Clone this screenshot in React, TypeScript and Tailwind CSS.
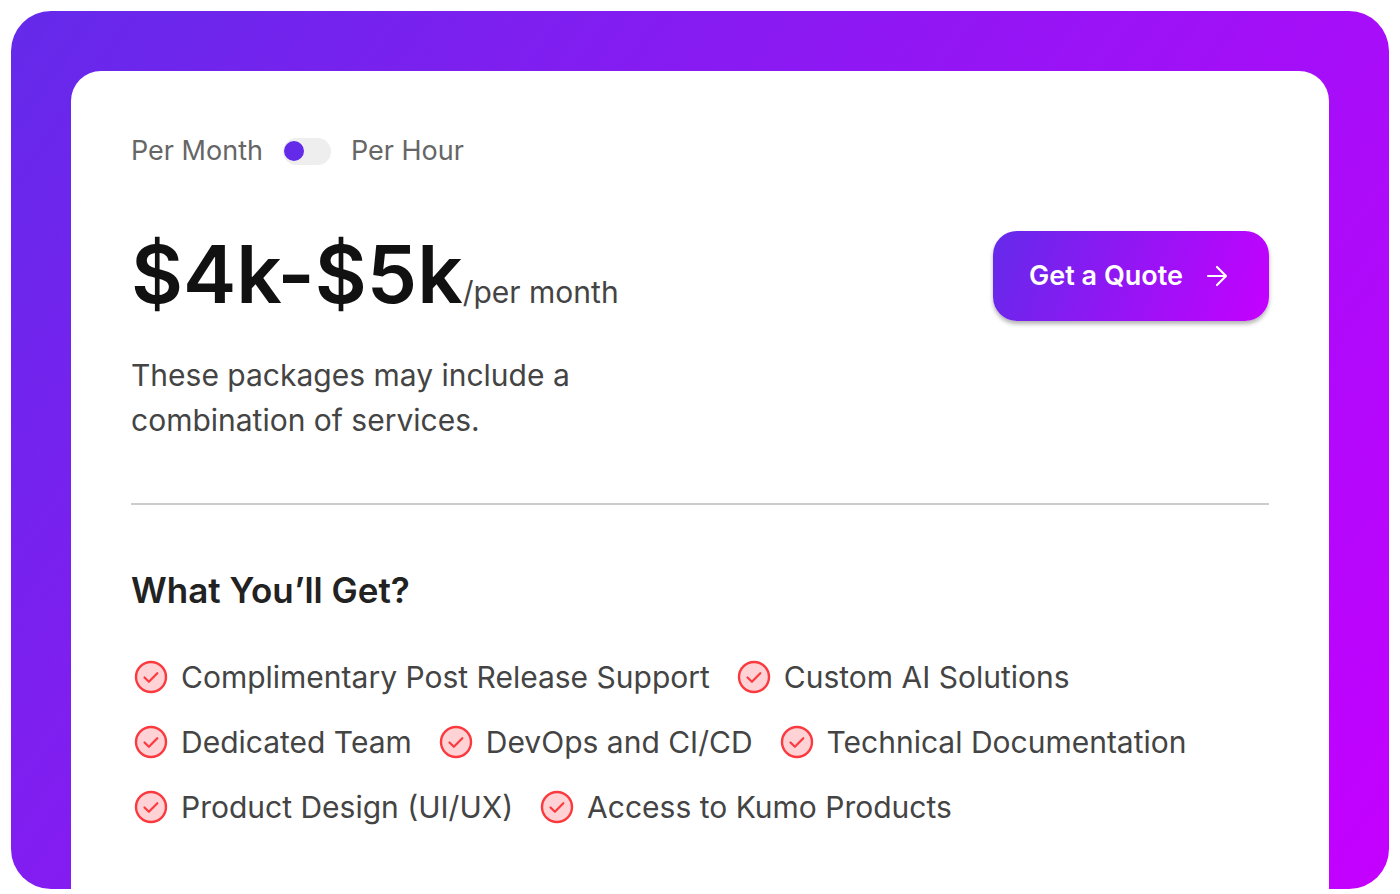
import { useState } from "react";

const features = [
  "Complimentary Post Release Support",
  "Custom AI Solutions",
  "Dedicated Team",
  "DevOps and CI/CD",
  "Technical Documentation",
  "Product Design (UI/UX)",
  "Access to Kumo Products",
];

const CheckIcon = () => (
  <svg
    viewBox="0 0 40 40"
    className="size-10 shrink-0"
    fill="none"
    aria-hidden="true"
  >
    <circle cx="20" cy="20" r="15" fill="#ffd3d5" stroke="#fb3a3f" strokeWidth="2.4" />
    <path
      d="M13.5 20.5l4.4 4.3 8.4-8.6"
      stroke="#fb3a3f"
      strokeWidth="2.2"
      strokeLinecap="round"
      strokeLinejoin="round"
    />
  </svg>
);

const ArrowIcon = () => (
  <svg
    viewBox="0 0 24 24"
    className="size-6"
    fill="none"
    stroke="currentColor"
    strokeWidth="2.2"
    strokeLinecap="round"
    strokeLinejoin="round"
    aria-hidden="true"
  >
    <path d="M3 12h18M12 3l9 9-9 9" />
  </svg>
);

const BillingToggle = () => {
  const [hourly, setHourly] = useState(false);

  return (
    <label className="flex items-center gap-5 text-[27px] leading-10 text-[#666666]">
      <span>Per Month</span>
      <input
        type="checkbox"
        role="switch"
        aria-label="Bill per hour"
        checked={hourly}
        onChange={(e) => setHourly(e.target.checked)}
        className="flex h-[27px] w-12 shrink-0 cursor-pointer appearance-none items-center rounded-full bg-[#eeeeee] px-px before:size-5 before:rounded-full before:bg-[#642aea] before:content-[''] checked:justify-end"
      />
      <span>Per Hour</span>
    </label>
  );
};

const App = () => {
  return (
    <main className="bg-white p-[11px] pb-[5px] font-['Inter',sans-serif]">
      <section className="rounded-[40px] bg-linear-125/srgb from-[#642aea] to-[#c500ff] px-[60px] pt-[60px]">
        <div className="rounded-t-[30px] bg-white px-[60px] pt-[60px] pb-[62px]">
          <BillingToggle />

          {/* Price and call to action */}
          <div className="mt-[60px] flex items-start justify-between">
            <div>
              <p className="flex items-baseline leading-[86px] text-[#444444]">
                <span className="text-[80px] font-semibold text-[#111111]">
                  $4k-$5k
                </span>
                <span className="text-[30px] leading-10">/per month</span>
              </p>
              <p className="mt-9 max-w-[480px] text-[30px] leading-[45px] text-[#444444]">
                These packages may include a combination of services.
              </p>
            </div>
            <button
              type="button"
              className="flex h-[90px] cursor-pointer items-center gap-[22px] rounded-3xl bg-linear-110/srgb from-[#642aea] to-[#c500ff] pr-10 pl-9 text-[27px] font-semibold text-white shadow-[0_3px_4px_rgba(0,0,0,0.3)]"
            >
              Get a Quote
              <ArrowIcon />
            </button>
          </div>

          <hr className="mt-[60px] border-t-2 border-[#cccccc]" />

          {/* Included services */}
          <h2 className="mt-[60px] text-[35px] leading-[50px] font-semibold text-[#222222]">
            What You’ll Get?
          </h2>
          <ul className="mt-[42px] flex flex-wrap gap-x-6 gap-y-[25px] text-[30px] leading-10 text-[#444444]">
            {features.map((feature) => (
              <li key={feature} className="flex items-center gap-2.5">
                <CheckIcon />
                {feature}
              </li>
            ))}
          </ul>
        </div>
      </section>
    </main>
  );
};

export default App;
